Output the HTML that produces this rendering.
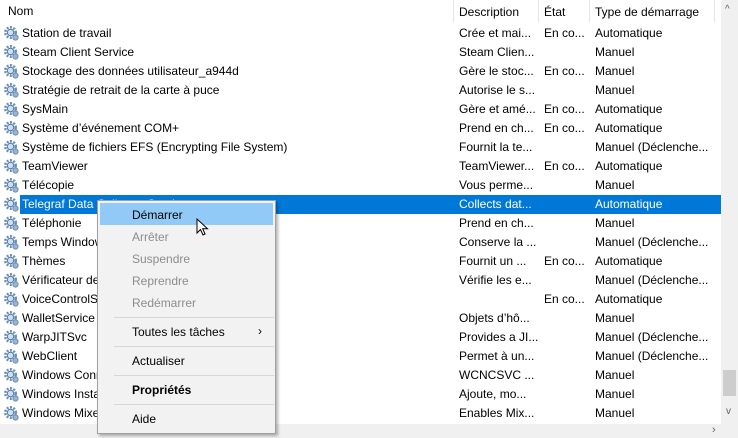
<!DOCTYPE html>
<html><head><meta charset="utf-8"><style>
body{margin:0;width:738px;height:438px;overflow:hidden;background:#fff;font-family:"Liberation Sans",sans-serif;font-size:12px;color:#000;position:relative}
.a{position:absolute;white-space:nowrap}
.hd{top:0;left:0;width:721px;height:24px;background:#fff}
.sep{position:absolute;top:0;width:1px;height:22px;background:#e5e5e5}
.row{position:absolute;left:0;width:721px;height:19px;line-height:19px}
.row span{position:absolute;white-space:nowrap}
.sel{position:absolute;left:20px;width:701px;height:19px;background:#0078d7}
.ic{position:absolute;left:4px;top:2px;width:15px;height:15px}
.menu{position:absolute;left:97px;top:200px;width:177px;height:232px;background:#f2f2f2;border:1px solid #a0a0a0;box-shadow:2px 2px 3px rgba(0,0,0,.3)}
.mi{position:absolute;left:34px;white-space:nowrap;line-height:22px;height:22px}
.dis{color:#8c8c8c}
.ms{position:absolute;left:16px;width:160px;height:1px;background:#d7d7d7}
</style></head><body>
<div class="a hd"></div>
<div class="a" style="left:8px;top:4px">Nom</div>
<div class="a" style="left:222px;top:-6px;color:#777;font-size:11px">^</div>
<div class="sep" style="left:453px"></div><div class="sep" style="left:538px"></div><div class="sep" style="left:589px"></div><div class="sep" style="left:714px"></div>
<div class="a" style="left:459px;top:5px">Description</div>
<div class="a" style="left:544px;top:5px">État</div>
<div class="a" style="left:595px;top:5px">Type de démarrage</div>
<div id="rows"></div>
<div class="a" style="left:721px;top:0;width:17px;height:424px;background:#f0f0f0"></div>
<div class="a" style="left:723px;top:370px;width:13px;height:26px;background:#cdcdcd"></div>
<div class="a" style="left:725px;top:4px;color:#606060;font-size:10px">^</div>
<div class="a" style="left:726px;top:406px;color:#606060;font-size:10px">v</div>
<div class="a" style="left:0;top:424px;width:738px;height:14px;background:#f0f0f0"></div>
<div class="a" style="left:712px;top:424px;color:#606060;font-size:11px">›</div>
<div class="menu">
<div class="a" style="left:2px;top:2px;width:173px;height:22px;background:#91c9f7"></div>
<div class="mi" style="top:3px">Démarrer</div>
<div class="mi dis" style="top:25px">Arrêter</div>
<div class="mi dis" style="top:47px">Suspendre</div>
<div class="mi dis" style="top:69px">Reprendre</div>
<div class="mi dis" style="top:91px">Redémarrer</div>
<div class="ms" style="top:116px"></div>
<div class="mi" style="top:120px">Toutes les tâches</div>
<div class="mi" style="top:119px;left:160px">›</div>
<div class="ms" style="top:145px"></div>
<div class="mi" style="top:149px">Actualiser</div>
<div class="ms" style="top:174px"></div>
<div class="mi" style="top:178px;font-weight:bold">Propriétés</div>
<div class="ms" style="top:203px"></div>
<div class="mi" style="top:207px">Aide</div>
</div>
<svg class="a" style="left:196px;top:218px" width="14" height="20" viewBox="0 0 14 20"><path d="M1 1 L1 15 L4.5 11.5 L7 17 L9 16 L6.7 10.7 L11.5 10.7 Z" fill="#fff" stroke="#000" stroke-width="1"/></svg>
<script>
var R=[["Station de travail","Crée et mai...","En co...","Automatique"],["Steam Client Service","Steam Clien...","","Manuel"],["Stockage des données utilisateur_a944d","Gère le stoc...","En co...","Manuel"],["Stratégie de retrait de la carte à puce","Autorise le s...","","Manuel"],["SysMain","Gère et amé...","En co...","Automatique"],["Système d’événement COM+","Prend en ch...","En co...","Automatique"],["Système de fichiers EFS (Encrypting File System)","Fournit la te...","","Manuel (Déclenche..."],["TeamViewer","TeamViewer...","En co...","Automatique"],["Télécopie","Vous perme...","","Manuel"],["Telegraf Data Collector Service","Collects dat...","","Automatique"],["Téléphonie","Prend en ch...","","Manuel"],["Temps Windows","Conserve la ...","","Manuel (Déclenche..."],["Thèmes","Fournit un ...","En co...","Automatique"],["Vérificateur de points","Vérifie les e...","","Manuel (Déclenche..."],["VoiceControlService","","En co...","Automatique"],["WalletService","Objets d’hô...","","Manuel"],["WarpJITSvc","Provides a JI...","","Manuel (Déclenche..."],["WebClient","Permet à un...","","Manuel (Déclenche..."],["Windows Connect Now - Config Registration","WCNCSVC ...","","Manuel"],["Windows Installer","Ajoute, mo...","","Manuel"],["Windows Mixed Reality","Enables Mix...","","Manuel"]];
var g='<svg class="ic" viewBox="0 0 15 15"><circle cx="6.5" cy="6.5" r="5.2" fill="none" stroke="#6a8fb8" stroke-width="2.6" stroke-dasharray="2 1.4"/><circle cx="6.5" cy="6.5" r="3.2" fill="#cfe0f2" stroke="#557aa6" stroke-width="1"/><circle cx="11.5" cy="11.5" r="2.6" fill="#9bb4cf" stroke="#6a8fb8" stroke-width="1"/></svg>';
var h='';R.forEach(function(r,i){var t=24+19*i,s=i==9;h+='<div class="row" style="top:'+t+'px;'+(s?'color:#fff':'')+'">'+(s?'<div class="sel"></div>':'')+g+'<span style="left:22px">'+r[0]+'</span><span style="left:459px">'+r[1]+'</span><span style="left:544px">'+r[2]+'</span><span style="left:595px">'+r[3]+'</span></div>'});
document.getElementById('rows').innerHTML=h;
</script>
</body></html>
